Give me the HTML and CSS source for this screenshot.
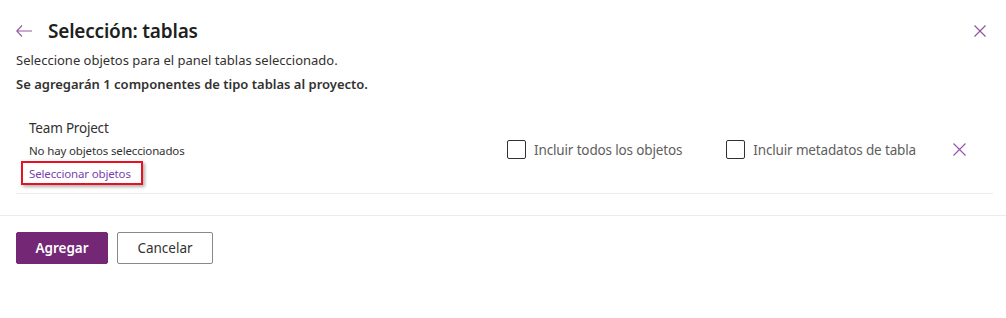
FILE: index.html
```html
<!DOCTYPE html>
<html lang="es">
<head>
<meta charset="utf-8">
<link rel="stylesheet" href="styles.css">
</head>
<body>
<div class="panel">
  <div class="header">
    <button class="icon-btn back" aria-label="Atrás">
      <svg width="16" height="12" viewBox="0 0 16 12"><path d="M6 0.5 L0.8 6 L6 11.5 M0.8 6 H16" fill="none" stroke="#8f5a9f" stroke-width="1.1"/></svg>
    </button>
    <h1 class="title">Selección: tablas</h1>
    <button class="icon-btn close" aria-label="Cerrar">
      <svg width="12" height="12" viewBox="0 0 12 12"><path d="M0.5 0.5 L11.5 11.5 M11.5 0.5 L0.5 11.5" fill="none" stroke="#8f4f9f" stroke-width="1.1"/></svg>
    </button>
  </div>
  <p class="desc">Seleccione objetos para el panel tablas seleccionado.</p>
  <p class="desc strong">Se agregarán 1 componentes de tipo tablas al proyecto.</p>

  <div class="item">
    <div class="item-info">
      <div class="item-name">Team Project</div>
      <div class="item-status">No hay objetos seleccionados</div>
      <div class="link-wrap"><a class="link" href="#">Seleccionar objetos</a></div>
    </div>
    <div class="item-options">
      <label class="check"><span class="box"></span><span>Incluir todos los objetos</span></label>
      <label class="check"><span class="box"></span><span>Incluir metadatos de tabla</span></label>
      <button class="icon-btn remove" aria-label="Quitar">
        <svg width="13" height="13" viewBox="0 0 13 13"><path d="M0.5 0.5 L12.5 12.5 M12.5 0.5 L0.5 12.5" fill="none" stroke="#9a4fae" stroke-width="1.1"/></svg>
      </button>
    </div>
  </div>
</div>
<div class="footer">
  <button class="btn primary">Agregar</button>
  <button class="btn secondary">Cancelar</button>
</div>
</body>
</html>
```
FILE: styles.css
```css
* { box-sizing: border-box; }
body {
  margin: 0;
  background: #fff;
  font-family: "Noto Sans", "Open Sans", sans-serif;
  color: #323130;
}
.panel {
  padding: 0 13px 0 16px;
}
.icon-btn {
  background: none;
  border: 0;
  padding: 0;
  cursor: pointer;
  display: flex;
  align-items: center;
  justify-content: center;
}
.header {
  display: flex;
  align-items: center;
  height: 48px;
  padding-top: 14px;
}
.back { width: 16px; margin-right: 16px; }
.title {
  margin: 0;
  font-size: 19px;
  font-weight: 600;
  letter-spacing: -0.2px;
  color: #201f1e;
  flex: 1;
}
.close { width: 14px; margin-right: 6px; }
.desc {
  margin: 0;
  font-size: 13px;
  line-height: 24px;
  color: #323130;
}
.desc.strong { font-weight: 600; }
.item {
  margin-top: 22px;
  display: flex;
  align-items: flex-start;
  border-bottom: 1px solid #edebe9;
  height: 76px;
}
.item-info { flex: 1; }
.item-name {
  font-size: 13.5px;
  line-height: 20px;
  padding-left: 13px;
  letter-spacing: -0.2px;
}
.item-status {
  font-size: 11.5px;
  line-height: 20px;
  padding-left: 13px;
  margin-top: 3px;
  letter-spacing: -0.15px;
}
.link-wrap {
  display: inline-block;
  margin-left: 5px;
  margin-top: -2px;
  border: 2px solid #e81123;
  box-shadow: 2px 2px 3px rgba(0,0,0,0.3);
  padding: 0 10px 0 6px;
  height: 24px;
  line-height: 19px;
}
.link {
  font-size: 11.5px;
  color: #7a3fae;
  text-decoration: none;
  letter-spacing: -0.15px;
}
.item-options {
  display: flex;
  align-items: center;
  padding-top: 22px;
  padding-right: 27px;
}
.check {
  display: flex;
  align-items: center;
  font-size: 13.5px;
  color: #605e5c;
  letter-spacing: -0.15px;
}
.check + .check { margin-left: 44px; }
.box {
  width: 19px;
  height: 19px;
  border: 1px solid #323130;
  border-radius: 2px;
  margin-right: 8px;
}
.remove { margin-left: 37px; width: 13px; }
.footer {
  border-top: 1px solid #edebe9;
  margin-top: 21px;
  padding: 16px 16px;
  display: flex;
  gap: 9px;
}
.btn {
  height: 32px;
  border-radius: 2px;
  font-family: inherit;
  font-size: 13.5px;
  font-weight: 600;
  cursor: pointer;
}
.primary {
  width: 92px;
  background: #742774;
  border: 1px solid #742774;
  color: #fff;
}
.secondary {
  width: 96px;
  background: #fff;
  border: 1px solid #8a8886;
  color: #323130;
  font-weight: 400;
}
```
